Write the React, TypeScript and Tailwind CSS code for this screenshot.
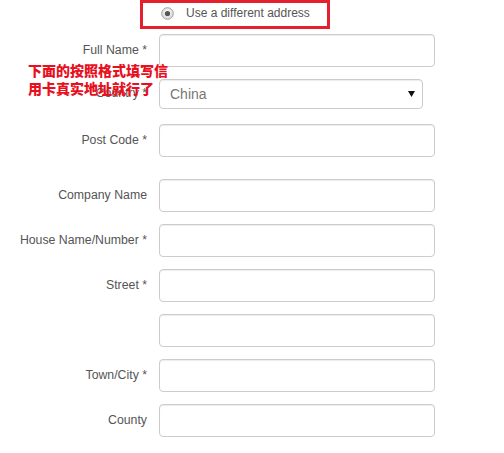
import React from "react";

const inputCls =
  "h-[33px] w-[276px] rounded-[4px] border border-[#cccccc] bg-white shadow-[inset_0_1px_1px_rgba(0,0,0,0.075)]";

function Row({
  label,
  className = "",
  children,
}: {
  label: string;
  className?: string;
  children?: React.ReactNode;
}) {
  return (
    <div className={"flex items-center " + className}>
      <div className="mt-[-2px] w-[147px] shrink-0 whitespace-nowrap text-right text-[12.3px] leading-[14px] text-[#555555]">
        {label}
      </div>
      <div className="ml-[12px]">{children ?? <div className={inputCls} />}</div>
    </div>
  );
}

export default function App() {
  return (
    <div
      className="relative h-[453px] w-[504px] overflow-hidden bg-white"
      style={{ fontFamily: '"Liberation Sans", Arial, sans-serif' }}
    >
      {/* radio option with red highlight box */}
      <div className="ml-[140px] flex h-[29px] w-[190px] items-center border-[3px] border-[#e5202e]">
        <svg width="13" height="13" viewBox="0 0 13 13" className="ml-[18px] mt-[-3px]">
          <defs>
            <radialGradient id="rg" cx="50%" cy="40%" r="60%">
              <stop offset="0%" stopColor="#ffffff" />
              <stop offset="100%" stopColor="#d4d4d4" />
            </radialGradient>
          </defs>
          <circle cx="6.5" cy="6.5" r="5.8" fill="url(#rg)" stroke="#a0a0a0" strokeWidth="1" />
          <circle cx="6.5" cy="6.5" r="2.6" fill="#555555" />
        </svg>
        <span className="ml-[12px] mt-[-3px] text-[12px] text-[#555555]">Use a different address</span>
      </div>

      <div className="mt-[5px] flex flex-col">
        <Row label="Full Name *" className="h-[33px]" />
        <Row label="Country *" className="mt-[12px] h-[30px]">
          <div className="flex h-[30px] w-[264px] items-center justify-between rounded-[4px] border border-[#cccccc] bg-white pl-[10px] pr-[7px] shadow-[inset_0_1px_1px_rgba(0,0,0,0.075)]">
            <span className="text-[14px] text-[#777777]">China</span>
            <svg width="7" height="6" viewBox="0 0 7 6">
              <path d="M0 0 H7 L3.5 6 Z" fill="#111111" />
            </svg>
          </div>
        </Row>
        <Row label="Post Code *" className="mt-[15px] h-[33px]" />
        <Row label="Company Name" className="mt-[22px] h-[33px]" />
        <Row label="House Name/Number *" className="mt-[12px] h-[33px]" />
        <Row label="Street *" className="mt-[12px] h-[33px]" />
        <Row label="" className="mt-[12px] h-[33px]" />
        <Row label="Town/City *" className="mt-[12px] h-[33px]" />
        <Row label="County" className="mt-[12px] h-[33px]" />
      </div>

      {/* red annotation overlay */}
      <div
        className="absolute left-[28px] top-[61px] text-[14px] font-black leading-[18px] text-[#e8101e]"
        style={{ fontFamily: '"Noto Sans CJK SC", "Noto Sans", sans-serif' }}
      >
        <div>下面的按照格式填写信</div>
        <div>用卡真实地址就行了</div>
      </div>
    </div>
  );
}
